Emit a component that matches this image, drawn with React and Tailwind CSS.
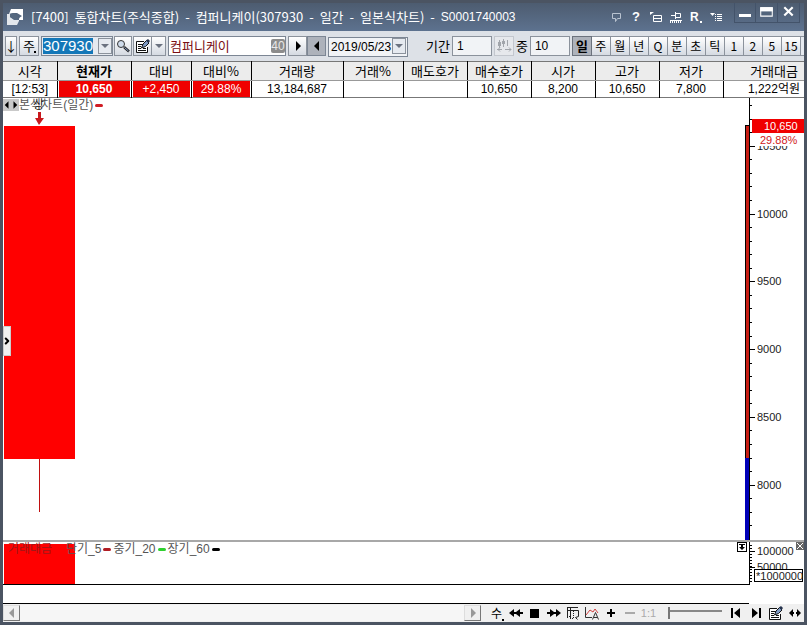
import React from "react";
import { ChevronRight } from "lucide-react";

const KOR = "font-['Noto_Sans_CJK_KR',sans-serif]";
const NUM = "font-['Liberation_Sans','Noto_Sans_CJK_KR',sans-serif]";
const BTN =
  "flex h-5 shrink-0 items-center justify-center border border-[#8b929c] bg-gradient-to-b from-white to-[#d5dae2]";
const FIELD = `${NUM} h-5 w-10 shrink-0 border border-[#8b929c] bg-[#f1f3f6] pl-1 text-[12px]`;

const TITLE = ["[7400]", "통합차트(주식종합)", "-", "컴퍼니케이(307930", "-", "일간", "-", "일본식차트)", "-"];

const PERIODS = ["일", "주", "월", "년", "Q", "분", "초", "틱", "1", "2", "5", "15"];

const COLUMNS = [
  { label: "시각", value: "[12:53]", width: "w-[54px]" },
  { label: "현재가", value: "10,650", width: "w-[74px]", hot: true, bold: true },
  { label: "대비", value: "+2,450", width: "w-[60px]", hot: true },
  { label: "대비%", value: "29.88%", width: "w-[60px]", hot: true },
  { label: "거래량", value: "13,184,687", width: "w-[92px]" },
  { label: "거래%", value: "", width: "w-[60px]" },
  { label: "매도호가", value: "", width: "w-[64px]" },
  { label: "매수호가", value: "10,650", width: "w-[64px]" },
  { label: "시가", value: "8,200", width: "w-[64px]" },
  { label: "고가", value: "10,650", width: "w-[64px]" },
  { label: "저가", value: "7,800", width: "w-[64px]" },
  { label: "거래대금", value: "1,222억원", width: "w-auto", right: true },
];

function Triangle({ dir, className = "h-2.5 w-2" }) {
  const points = {
    left: "6,0 6,10 1,5",
    right: "2,0 2,10 7,5",
    down: "0,3 8,3 4,7",
  };
  return (
    <svg viewBox="0 0 8 10" className={className} fill="currentColor">
      <polygon points={points[dir]} />
    </svg>
  );
}

function NoteIcon() {
  return (
    <svg viewBox="0 0 14 14" className="h-3.5 w-3.5" fill="none" stroke="#111">
      <path d="M8 2.500H.5v11h11V8" fill="#fff" />
      <path d="M2 5.500h5M2 7.500h3M2 9.500h3M7 9.500h3M2 11.500h8" />
      <path d="M5.500 9l1.500-4 3.500-3.500 2.500 2.500L9.500 7.500z" fill="#7f9ac4" />
      <path d="M10 1.500l2-1.500 2 2-1.500 2z" fill="#26334d" stroke="none" />
    </svg>
  );
}

function TitleBar() {
  return (
    <header className="flex h-7 items-center bg-gradient-to-b from-[#4d5c70] to-[#5d728f] pl-1 text-white">
      <svg viewBox="0 0 16 16" className="h-4 w-4 shrink-0">
        <path d="M4 0h12v11h-4v-2l3-2-5-3H6L2 5z" fill="#fff" />
        <path d="M0 5h3v3l4 3h5v1l-2 4H0z" fill="#e3e7ec" />
        <path d="M3 5l4-1 6 5-3 1H7L3 8z" fill="#55687f" />
      </svg>
      <h1 className="ml-2 flex gap-1.5 whitespace-nowrap text-[13px] leading-4">
        {TITLE.map((word, i) => (
          <span key={i}>{word}</span>
        ))}
        <span className={`${NUM} text-[12px]`}>S0001740003</span>
      </h1>
      <div className="ml-auto flex items-center gap-2 pr-3">
        <button aria-label="메모" className="h-3 w-3">
          <svg viewBox="0 0 12 12" fill="none" stroke="#b9c3d0">
            <path d="M2.500 2.500h8v5h-3l-2 3v-3h-3z" />
          </svg>
        </button>
        <button className="w-3 font-['Liberation_Sans'] text-[13px] leading-4 font-bold">?</button>
        <button aria-label="창 분리" className="h-3 w-3">
          <svg viewBox="0 0 12 12" fill="none" stroke="#fff">
            <path d="M3.500 4.500h8v6h-8zM3 7.500h9" />
            <path d="M0 4V1h4z" fill="#fff" stroke="none" />
          </svg>
        </button>
        <button aria-label="고정" className="h-3 w-3">
          <svg viewBox="0 0 12 12" fill="none" stroke="#fff">
            <path d="M1 4.500h4M5.500 1v7M6 2.500h4.500v4H6M0 9.500h12" />
            <path d="M0 11.500h12M0 10.500h12" strokeDasharray="1 1" />
          </svg>
        </button>
        <button className="relative w-3 text-left font-['Liberation_Sans'] text-[12px] leading-4 font-bold">
          R
          <span className="absolute right-0 bottom-0.5 h-0.5 w-0.5 bg-white" />
        </button>
        <button aria-label="메뉴" className="h-3 w-3">
          <svg viewBox="0 0 12 12" fill="none" stroke="#fff">
            <path d="M0 2h5L2.500 5z" fill="#fff" stroke="none" />
            <path d="M5 3.500h1M7 3.500h5M5 5.500h1M7 5.500h5M5 7.500h1M7 7.500h5M5 9.500h1M7 9.500h5" />
          </svg>
        </button>
      </div>
      <div className="mr-1 flex self-start">
        <button aria-label="최소화" className="h-5 w-[22px] border border-t-0 border-[#43536a]">
          <svg viewBox="0 0 20 18">
            <path d="M4 10h12v3H4z" fill="#fff" />
          </svg>
        </button>
        <button aria-label="최대화" className="h-5 w-[22px] border border-t-0 border-l-0 border-[#43536a]">
          <svg viewBox="0 0 20 18">
            <path d="M4.500 4.500h11v8h-11z" fill="#52647b" stroke="#fff" />
            <path d="M4 4h12v4H4z" fill="#fff" />
          </svg>
        </button>
        <button aria-label="닫기" className="h-5 w-[22px] border border-t-0 border-l-0 border-[#43536a]">
          <svg viewBox="0 0 20 18">
            <path d="M6 4l8 8M14 4l-8 8" stroke="#fff" strokeWidth="2" />
          </svg>
        </button>
      </div>
    </header>
  );
}

function Toolbar() {
  return (
    <div className="flex h-[30px] items-center overflow-hidden bg-[#dde1e7] pl-0.5 text-[13px] text-black">
      <button className={`${BTN} w-3`}>↓</button>
      <button className={`${BTN} relative ml-0.5 w-5`}>
        주
        <span className="absolute right-0.5 bottom-0.5 h-0.5 w-0.5 bg-black" />
      </button>
      <div className="ml-0.5 flex h-5 w-[72px] shrink-0 items-center border border-[#7c8694] bg-[#e6eaf0]">
        <input
          aria-label="종목코드"
          defaultValue="307930"
          className={`${NUM} ml-px h-4 w-[50px] bg-[#1377b8] text-[15px] leading-4 text-white`}
        />
        <button aria-label="최근 종목" className="ml-auto flex h-4 w-3.5 items-center justify-center border border-[#8b929c] bg-[#e6eaf0] text-[#6b7280]">
          <Triangle dir="down" />
        </button>
      </div>
      <button aria-label="종목 찾기" className={`${BTN} ml-px w-[18px]`}>
        <svg viewBox="0 0 14 14" className="h-3.5 w-3.5 shrink-0" fill="none">
          <circle cx="5" cy="5" r="3.5" fill="#cfdcec" stroke="#333" />
          <path d="M8 8l5 4.500" stroke="#222" strokeWidth="2.500" />
          <path d="M8.500 8.500l4 3.500" stroke="#8ba3cc" />
        </svg>
      </button>
      <button aria-label="메모" className={`${BTN} ml-px w-[19px]`}>
        <NoteIcon />
      </button>
      <button aria-label="메모 목록" className={`${BTN} w-3.5 border-l-0 text-[#6b7280]`}>
        <Triangle dir="down" />
      </button>
      <div className="ml-0.5 flex h-5 w-[118px] shrink-0 items-center border border-[#7c8694] bg-white">
        <input aria-label="종목명" defaultValue="컴퍼니케이" className="h-4 w-[102px] pl-px text-[13px] text-[#7b0f14]" />
        <span className={`${NUM} h-3.5 w-3.5 rounded-xs bg-[#8c8c8c] text-center text-[12px] leading-3.5 text-[#e8e8e8]`}>40</span>
      </div>
      <button aria-label="다음" className={`${BTN} ml-0.5 w-[19px]`}>
        <Triangle dir="right" />
      </button>
      <button aria-label="이전" className="flex h-5 w-[19px] shrink-0 items-center justify-center border border-[#7c8694] bg-[#adb2bb]">
        <Triangle dir="left" />
      </button>
      <div className="relative ml-0.5 h-5 w-20 shrink-0">
        <select
          aria-label="조회일"
          className={`${NUM} h-5 w-20 appearance-none border border-[#7c8694] bg-[#f1f3f6] pl-0.5 text-[12px] leading-4`}
        >
          <option>2019/05/23</option>
        </select>
        <span className="pointer-events-none absolute top-0.5 right-0.5 flex h-4 w-3.5 items-center justify-center border border-[#8b929c] bg-[#e6eaf0] text-[#6b7280]">
          <Triangle dir="down" />
        </span>
      </div>
      <label htmlFor="term" className="ml-[18px] shrink-0">기간</label>
      <input id="term" defaultValue="1" className={`${FIELD} ml-0.5`} />
      <button aria-label="봉 이동" className="ml-0.5 h-5 w-5 shrink-0 border border-[#c3c7ce] bg-[#e6e8ec]">
        <svg viewBox="0 0 18 18" fill="none" stroke="#a1a5ab">
          <path d="M4.500 3v8M8.500 2v8M12.500 3v6M2 12.500h5M10 12.500h6M14 10.500l2 2-2 2M5 10.500l-2 2 2 2" />
          <path d="M3 5h3v4H3zM7 4h3v3H7z" fill="#a1a5ab" stroke="none" />
        </svg>
      </button>
      <label htmlFor="count" className="ml-0.5 shrink-0">중</label>
      <input id="count" defaultValue="10" className={`${FIELD} ml-0.5`} />
      <div className="ml-0.5 flex min-w-0 flex-1 overflow-hidden">
        {PERIODS.map((p, i) => (
          <button
            key={p}
            className={
              i === 0
                ? "h-5 w-5 shrink-0 border border-[#6b727d] bg-[#adb2bb] font-bold leading-4"
                : "h-5 w-[19px] shrink-0 border border-l-0 border-[#8b929c] bg-gradient-to-b from-white to-[#d5dae2] text-[12px] leading-4"
            }
          >
            {p}
          </button>
        ))}
        <button aria-label="더보기" className="h-5 flex-1 border-y border-[#8b929c] bg-[#e6eaf0]" />
      </div>
    </div>
  );
}

function QuoteTable() {
  return (
    <table className="w-full table-fixed border-collapse border-y border-[#777] bg-white text-center leading-4 text-black">
      <thead>
        <tr className="h-[19px] bg-[#ececec] text-[13px]">
          {COLUMNS.map((c) => (
            <th
              key={c.label}
              className={`${c.width} border-r border-b border-r-black border-b-[#999] p-0 last:border-r-0 ${c.bold ? "font-bold" : "font-normal"} ${c.right ? "pr-1.5 text-right" : ""}`}
            >
              {c.label}
            </th>
          ))}
        </tr>
      </thead>
      <tbody>
        <tr className={`${NUM} h-[17px] text-[12px]`}>
          {COLUMNS.map((c) => (
            <td key={c.label} className={`border-r border-black p-0 last:border-r-0 ${c.right ? "pr-1 text-right" : ""}`}>
              {c.hot ? (
                <div className={`mx-px bg-[#f00000] text-white ${c.bold ? "font-bold" : ""}`}>{c.value}</div>
              ) : (
                c.value
              )}
            </td>
          ))}
        </tr>
      </tbody>
    </table>
  );
}

// y inside the price pane for a price, 500 won = 68px
const priceY = (price) => Math.round(115.5 - ((price - 10000) / 500) * 67.8);

function PriceAxis() {
  const ticks = [];
  for (let p = 7700; p <= 10800; p += 100) ticks.push(p);
  return (
    <svg width="60" height="442" className="block font-['Liberation_Sans'] text-[11px]" shapeRendering="crispEdges">
      <rect x="1" y="27" width="4" height="333" fill="#c81e14" />
      <path d="M1.500 360V27.500H5" fill="none" stroke="#000" />
      <rect x="1" y="360" width="4" height="82" fill="#0000b8" />
      <path d="M5.500 0v442" stroke="#000" />
      {ticks.map((p) => (
        <path key={p} d={`M6 ${priceY(p) + 0.5}h${p % 500 === 0 ? 5 : 2}`} stroke="#000" />
      ))}
      {[10500, 10000, 9500, 9000, 8500, 8000].map((p) => (
        <text key={p} x="13" y={priceY(p) + 4} fill="#222">
          {p}
        </text>
      ))}
      <rect x="12" y="35" width="48" height="13" fill="#fff" />
      <rect x="8" y="21" width="52" height="14" fill="#f00000" />
      <text x="20" y="32" fill="#fff">10,650</text>
      <text x="16" y="46" fill="#d01818">29.88%</text>
    </svg>
  );
}

function PricePane() {
  return (
    <section className="relative flex justify-between bg-white">
      <svg width="110" height="442" className="block" shapeRendering="crispEdges">
        <rect x="1" y="28" width="71" height="333" fill="#ff0000" />
        <path d="M36.500 361v53" stroke="#c01010" />
        <path d="M35 14h3v6h3l-5 7-4-7h3z" fill="#c8181c" shapeRendering="auto" />
      </svg>
      <PriceAxis />
      <div className={`${NUM} absolute top-0 left-0 flex items-center text-[12px] leading-[14px] text-[#555]`}>
        <div className="flex h-3 w-4 items-center justify-center gap-0.5 bg-[#c9c9c9] text-black">
          <Triangle dir="left" className="h-2 w-1.5" />
          <Triangle dir="right" className="h-2 w-1.5" />
        </div>
        <span>본식차트(일간)</span>
        <span className="ml-0.5 h-[3px] w-2 rounded-full bg-[#d01c24]" />
      </div>
      <span className="absolute top-0 left-[30px] text-[12px] leading-3 text-[#222]">상</span>
      <button
        aria-label="펼치기"
        className="absolute top-[228px] left-0 flex h-[30px] w-2 items-center justify-center border border-[#ccc] bg-[#f0f0f0] text-black"
      >
        <ChevronRight className="h-2.5 w-2.5 shrink-0" strokeWidth={5} />
      </button>
    </section>
  );
}

const LEGEND = [
  { label: "단기_5", color: "bg-[#b01c24]" },
  { label: "중기_20", color: "bg-[#2fd02f]" },
  { label: "장기_60", color: "bg-black" },
];

function VolumePane() {
  const ticks = [];
  for (let y = 3; y < 42; y += 3) ticks.push(y);
  return (
    <section className="relative flex border-t-2 border-[#a8a8a8] bg-white">
      <div className="h-[62px] min-w-0 flex-1 border-b border-black">
        <div className="h-[43px] border-b border-black pt-0.5 pl-px">
          <div className="h-10 w-[71px] bg-[#ff0000]" />
        </div>
      </div>
      <svg width="55" height="62" className="block font-['Liberation_Sans'] text-[11px]" shapeRendering="crispEdges">
        <path d="M.5 0v43" stroke="#000" />
        {ticks.map((y) => (
          <path key={y} d={`M1 ${y + 0.5}h2`} stroke="#000" />
        ))}
        <path d="M1 9.500h5M1 25.500h5" stroke="#000" />
        <text x="8" y="13" fill="#222">100000</text>
        <text x="8" y="29" fill="#222">50000</text>
        <rect x="5.5" y="27.500" width="48" height="12" fill="#fff" stroke="#000" />
        <text x="7" y="38" fill="#222">*1000000</text>
      </svg>
      <div className={`${NUM} absolute top-0 left-[5px] flex items-center text-[12px] leading-[14px] text-[#555]`}>
        <span className="w-[58px] text-[#a01818]">거래대금</span>
        {LEGEND.map((l) => (
          <span key={l.label} className="mr-0.5 flex items-center gap-0.5">
            {l.label}
            <span className={`h-[3px] w-2 rounded-full ${l.color}`} />
          </span>
        ))}
      </div>
      <button aria-label="아래로" className="absolute top-0 right-[57px] h-2.5 w-2.5 border border-black bg-white">
        <svg viewBox="0 0 8 8">
          <path d="M1 1h6v1H5v2h2L4 7 1 4h2V2H1z" fill="#000" />
        </svg>
      </button>
      <button aria-label="닫기" className="absolute top-0 right-0 h-2 w-2 bg-[#666]">
        <svg viewBox="0 0 8 8">
          <path d="M1 1l6 6M7 1L1 7" stroke="#fff" />
        </svg>
      </button>
    </section>
  );
}

const TOOL = "flex h-4 w-[19px] shrink-0 items-center justify-center";
const SCROLL =
  "flex h-4 w-[17px] items-center justify-center border border-[#ddd] border-r-[#777] border-b-[#777] bg-[#f0f0f0] text-[#999]";

function BottomBar() {
  return (
    <footer className="flex flex-1 items-center bg-[#f0f0f0] text-black">
      <div className="flex min-w-0 flex-1 items-center bg-[#f6f6f6]">
        <button aria-label="왼쪽으로" className={SCROLL}>
          <Triangle dir="left" />
        </button>
        <span className="flex-1" />
        <button aria-label="오른쪽으로" className={SCROLL}>
          <Triangle dir="right" />
        </button>
      </div>
      <div className="ml-1.5 flex items-center">
        <button className={`${TOOL} relative text-[12px]`}>
          수
          <span className="absolute right-0.5 bottom-0 h-0.5 w-0.5 bg-black" />
        </button>
        <button aria-label="뒤로" className={TOOL}>
          <svg viewBox="0 0 14 10" className="h-2.5 w-3.5">
            <path d="M0 5l5-4v3h2l4-3v3h3v2h-3v3L7 6H5v3z" />
          </svg>
        </button>
        <button aria-label="정지" className={TOOL}>
          <span className="h-[9px] w-[9px] bg-black" />
        </button>
        <button aria-label="앞으로" className={TOOL}>
          <svg viewBox="0 0 14 10" className="h-2.5 w-3.5 rotate-180">
            <path d="M0 5l5-4v3h2l4-3v3h3v2h-3v3L7 6H5v3z" />
          </svg>
        </button>
        <button aria-label="차트 전환" className={TOOL}>
          <svg viewBox="0 0 14 14" className="h-3.5 w-3.5" fill="none" stroke="#222">
            <path d="M1 1.500h11M1 4.500h8M1.500 1v11M4.500 1v12" />
            <path d="M7.500 5v8M4 12.500h4M1 10.500h3" strokeDasharray="1 1" />
            <path d="M9 4.500h3.500v6M12.500 10.500l-3 1 2 2" />
          </svg>
        </button>
        <button aria-label="자동 추세" className={TOOL}>
          <svg viewBox="0 0 15 14" className="h-3.5 w-[15px]" fill="none">
            <path d="M1.500 1v10.500H8" stroke="#333" />
            <path d="M2 9l4-5 3 2 2-3 3 4" stroke="#d04040" />
            <path d="M8.500 13.500l3-7 3 7M9.500 11.500h4" stroke="#333" />
          </svg>
        </button>
        <button aria-label="확대" className={TOOL}>
          <svg viewBox="0 0 10 10" className="h-2.5 w-2.5">
            <path d="M1 5h8M5 1v8" stroke="#000" strokeWidth="2" />
          </svg>
        </button>
        <button aria-label="축소" className={TOOL}>
          <svg viewBox="0 0 10 10" className="h-2.5 w-2.5">
            <path d="M0 5h10" stroke="#aaa" strokeWidth="2" />
          </svg>
        </button>
        <button className={`${TOOL} ${NUM} text-[11px] text-[#aaa]`}>1:1</button>
        <input
          type="range"
          aria-label="배율"
          defaultValue="0"
          className="mr-1 ml-2.5 h-4 w-[54px] appearance-none bg-[linear-gradient(#888,#888)] bg-[length:100%_2px] bg-[position:0_5px] bg-no-repeat [&::-webkit-slider-thumb]:h-3 [&::-webkit-slider-thumb]:w-0.5 [&::-webkit-slider-thumb]:appearance-none [&::-webkit-slider-thumb]:bg-[#777]"
        />
        <button aria-label="처음" className="flex h-4 w-5 shrink-0 items-center justify-center">
          <svg viewBox="0 0 10 10" className="h-2.5 w-2.5">
            <path d="M0 0h2v10H0zM9 0v10L3 5z" />
          </svg>
        </button>
        <button aria-label="끝" className="flex h-4 w-5 shrink-0 items-center justify-center">
          <svg viewBox="0 0 10 10" className="h-2.5 w-2.5">
            <path d="M8 0h2v10H8zM1 0v10l6-5z" />
          </svg>
        </button>
        <button aria-label="설정" className={TOOL}>
          <NoteIcon />
        </button>
        <button aria-label="너비 조절" className={TOOL}>
          <svg viewBox="0 0 12 8" className="h-2 w-3">
            <path d="M0 4l4-4v3h1v2H4v3zM12 4L8 0v3H7v2h1v3z" />
          </svg>
        </button>
      </div>
    </footer>
  );
}

export default function App() {
  return (
    <div className={`flex min-h-screen flex-col border-[3px] border-[#4b5462] bg-[#4b5462] ${KOR}`}>
      <TitleBar />
      <Toolbar />
      <QuoteTable />
      <main>
        <PricePane />
        <VolumePane />
      </main>
      <BottomBar />
    </div>
  );
}
